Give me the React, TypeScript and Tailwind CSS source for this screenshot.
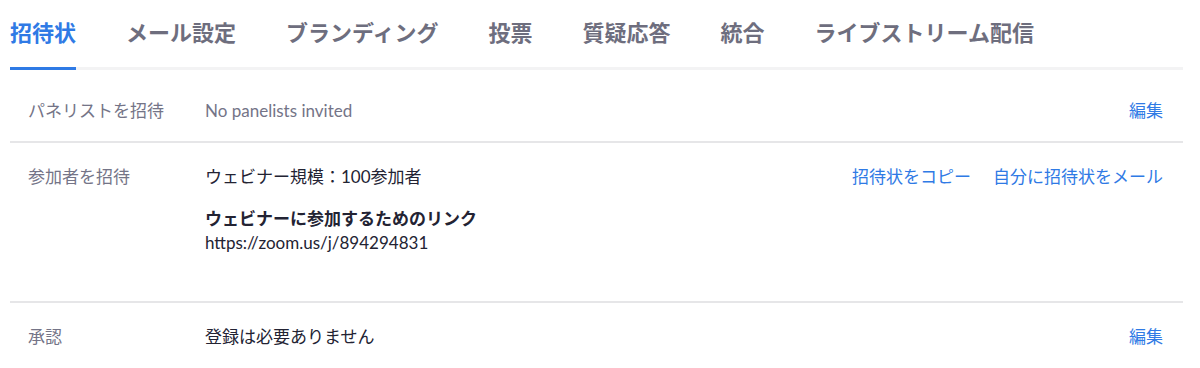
import React from "react";

const tabs = ["招待状", "メール設定", "ブランディング", "投票", "質疑応答", "統合", "ライブストリーム配信"];

export default function App() {
  return (
    <div
      className="w-[1200px] h-[368px] bg-white overflow-hidden pl-[10px] pr-[17px]"
      style={{ fontFamily: 'Lato, "Noto Sans CJK JP", sans-serif' }}
    >
      <div className="flex gap-[50px] border-b-[3px] border-[#f3f3f4]">
        {tabs.map((t, i) => (
          <div
            key={t}
            className={
              i === 0
                ? "pt-[18px] pb-[16px] -mb-[3px] border-b-[3px] border-[#2f7ae5] text-[#2f7ae5] text-[22px] leading-[30px] font-bold"
                : "pt-[18px] pb-[19px] text-[#6e6e7e] text-[22px] leading-[30px] font-bold"
            }
          >
            {t}
          </div>
        ))}
      </div>

      <div className="flex items-start border-b-2 border-[#e6e6e8] pt-[29px] pb-[18px] pl-[18px] pr-[20px] text-[17px] leading-[24px]">
        <div className="w-[177px] text-[#747487]">パネリストを招待</div>
        <div className="flex-1 text-[#747487]">No panelists invited</div>
        <a className="text-[#2f7ae5]">編集</a>
      </div>

      <div className="flex items-start border-b-2 border-[#e6e6e8] pt-[22px] pb-[46px] pl-[18px] pr-[20px] text-[17px] leading-[24px]">
        <div className="w-[177px] text-[#747487]">参加者を招待</div>
        <div className="flex-1 text-[#232333]">
          <div>ウェビナー規模：100参加者</div>
          <div className="mt-[18px] font-bold">ウェビナーに参加するためのリンク</div>
          <div>https://zoom.us/j/894294831</div>
        </div>
        <div className="flex gap-[22px] text-[#2f7ae5]">
          <a>招待状をコピー</a>
          <a>自分に招待状をメール</a>
        </div>
      </div>

      <div className="flex items-start pt-[22px] pb-[20px] pl-[18px] pr-[20px] text-[17px] leading-[24px]">
        <div className="w-[177px] text-[#747487]">承認</div>
        <div className="flex-1 text-[#232333]">登録は必要ありません</div>
        <a className="text-[#2f7ae5]">編集</a>
      </div>
    </div>
  );
}
